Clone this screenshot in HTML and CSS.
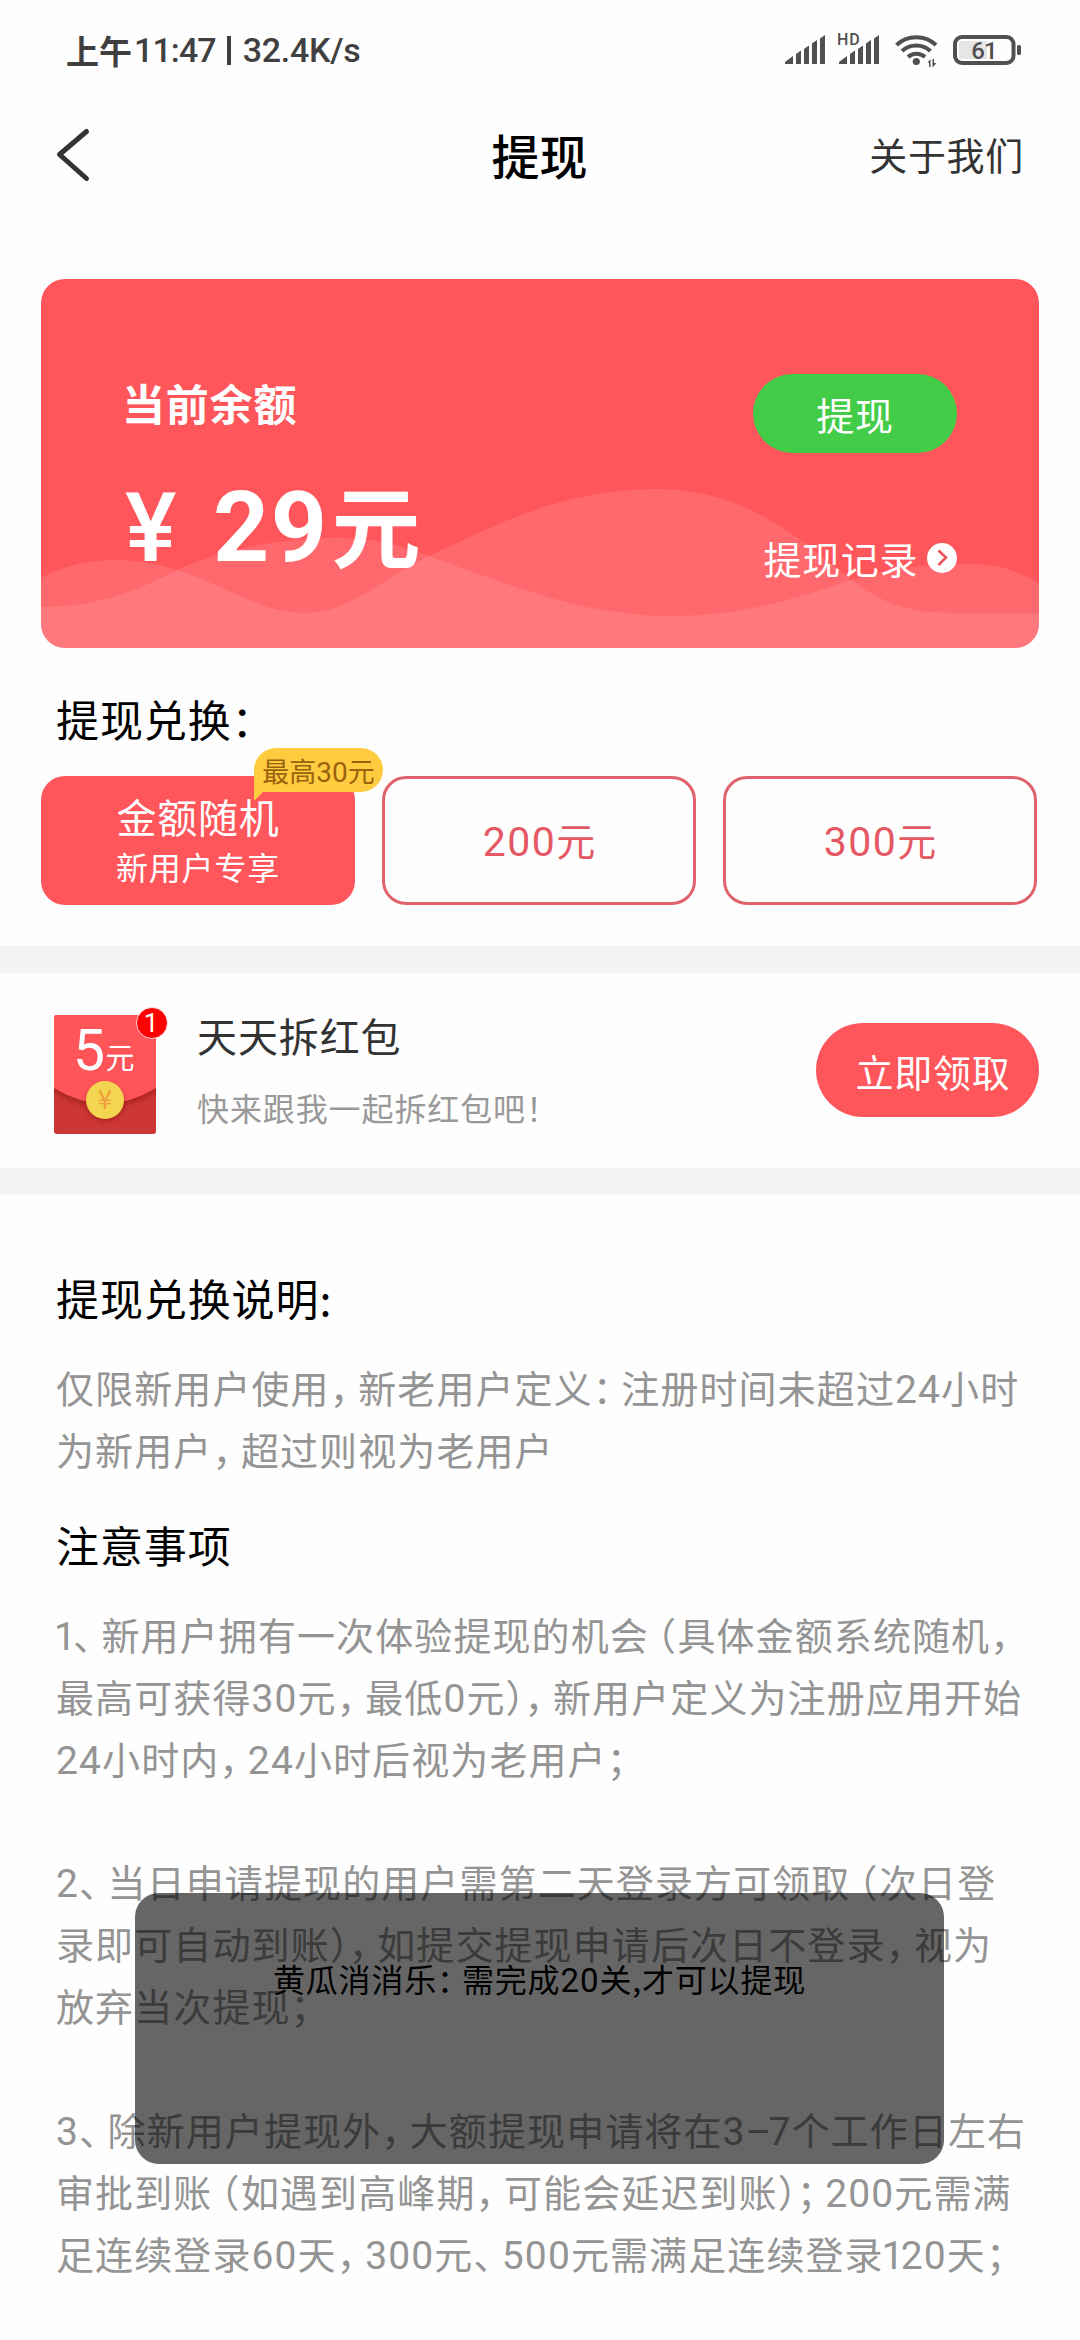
FILE: index.html
```html
<!DOCTYPE html>
<html lang="zh-CN">
<head>
<meta charset="utf-8">
<title>提现</title>
<link rel="stylesheet" href="styles.css">
</head>
<body>
<div class="screen">
  <header class="status">
    <div class="status-text"><span class="status-time">上午</span><span class="clock">11:47</span><i class="status-bar"></i><span class="status-rate">32.4K/s</span></div>
    <svg class="status-icons" width="240" height="40" viewBox="784 30 240 40" fill="#505050">
      <path d="M784 64v-2l8-6v8zM795 64V54l5-3.500v13.500zM803 64V49l5-3.500v18.500zM811 64V43.500l5-3.500v24zM819 64V38.500l5-3.500v29z"/>
      <path d="M838 64v-2l8-6v8zM849 64V54l5-3.500v13.500zM857 64V49l5-3.500v18.500zM865 64V43.500l5-3.500v24zM873 64V38.500l5-3.500v29z"/>
      <text x="836" y="45" class="hd">HD</text>
      <g fill="none" stroke="#505050" stroke-width="4">
        <path d="M895.500 45a29 29 0 0 1 39.500 0"/>
        <path d="M901 51a21 21 0 0 1 28.500 0"/>
        <path d="M907 57a13 13 0 0 1 17 0"/>
      </g>
      <circle cx="915.300" cy="61.500" r="3.600"/>
      <path d="M926.500 62.500l3-3.500v8h-1.500v-4.500zM931.500 59h1.500v4h2.500l-4 4.500z"/>
      <rect x="958" y="41" width="28" height="18" fill="#e6e6e6"/>
      <rect x="954" y="37" width="58.500" height="26" rx="7" fill="none" stroke="#505050" stroke-width="4"/>
      <rect x="1016" y="45" width="4" height="10" rx="1.500"/>
      <text x="983" y="58.500" class="battery">61</text>
    </svg>
  </header>

  <nav class="nav">
    <svg class="back" width="40" height="60" viewBox="52 125 40 60" fill="none" stroke="#333" stroke-width="5" stroke-linecap="round" stroke-linejoin="round"><path d="M86.500 131.500L59.500 154.500L86.500 178.500"/></svg>
    <h1 class="title">提现</h1>
    <a class="about">关于我们</a>
  </nav>

  <section class="card">
    <svg class="waves" width="998" height="369" viewBox="41 279 998 369" fill="#fff">
      <path fill-opacity=".11" d="M41 578C80 556 130 555 177 570C228 586 260 613 305 613C350 613 380 580 427 557C490 528 560 489 655 489C740 489 790 530 852 580C890 610 920 613 960 613H1039V648H41z"/>
      <path fill-opacity=".11" d="M41 607C90 607 130 595 177 570C220 550 280 538 335 538C375 538 400 545 427 555C520 590 590 616 672 616C740 616 790 600 852 580C890 567 930 564 967 564C1000 564 1020 572 1039 583V648H41z"/>
    </svg>
    <div class="balance">
      <div class="balance-label">当前余额</div>
      <div class="amount"><span class="yen">¥</span><span class="figure">29</span>元</div>
    </div>
    <div class="actions">
      <button class="withdraw">提现</button>
      <a class="records">提现记录
        <svg width="30" height="30" viewBox="0 0 30 30"><circle cx="15" cy="15" r="15" fill="#fff"/><path d="M11.500 7.500L19 14.500L11.500 22" fill="none" stroke="#ea555c" stroke-width="2.600"/></svg>
      </a>
    </div>
  </section>

  <section class="exchange">
    <h2 class="heading">提现兑换：</h2>
    <div class="options">
      <div class="option selected">
        <div class="option-title">金额随机</div>
        <div class="option-sub">新用户专享</div>
        <div class="tag">
          <svg class="tag-shape" width="129" height="53" viewBox="0 0 129 53"><path fill="#ffcc40" d="M22 0H107a22 22 0 0 1 0 44H9L0 53V22A22 22 0 0 1 22 0z"/></svg>
          <span class="tag-text">最高<b>30</b>元</span>
        </div>
      </div>
      <div class="option"><b>200</b>元</div>
      <div class="option"><b>300</b>元</div>
    </div>
  </section>

  <section class="packet">
    <svg class="envelope" width="116" height="130" viewBox="54 1005 116 130">
      <defs>
        <clipPath id="env"><rect x="54" y="1015" width="102" height="119" rx="3"/></clipPath>
        <filter id="soft" x="-30%" y="-30%" width="160%" height="160%"><feGaussianBlur stdDeviation="2.200"/></filter>
      </defs>
      <g clip-path="url(#env)">
        <rect x="54" y="1015" width="102" height="119" fill="#cc3735"/>
        <path d="M50 1012H160V1090Q105 1126 50 1090z" fill="#8f1512" opacity=".45" filter="url(#soft)"/>
        <path d="M54 1015H156V1088Q105 1119 54 1088z" fill="#ff5458"/>
      </g>
      <circle cx="105" cy="1102.500" r="19" fill="#8f1512" opacity=".5" filter="url(#soft)"/>
      <circle cx="105" cy="1100" r="19" fill="#f4d550"/>
      <text x="105" y="1109" class="coin">¥</text>
      <text x="73" y="1070" class="five">5</text>
      <text x="105.500" y="1068.500" class="yuan">元</text>
      <circle cx="152" cy="1023" r="15.500" fill="#f00" stroke="#fff" stroke-width=".8"/>
      <text x="151" y="1032" class="count">1</text>
    </svg>
    <div class="packet-text">
      <div class="packet-title">天天拆红包</div>
      <div class="packet-sub">快来跟我一起拆红包吧！</div>
    </div>
    <button class="claim">立即领取</button>
  </section>

  <section class="rules">
    <h2 class="heading">提现兑换说明:</h2>
    <div class="body-text">
      <p>仅限新用户使用<i>，</i>新老用户定义<i>：</i>注册时间未超过<b>24</b>小时</p>
      <p>为新用户<i>，</i>超过则视为老用户</p>
    </div>
    <h2 class="heading second">注意事项</h2>
    <div class="body-text">
      <p><b class="one">1</b><i>、</i>新用户拥有一次体验提现的机会<i class="open">（</i>具体金额系统随机<i>，</i></p>
      <p>最高可获得<b>30</b>元<i>，</i>最低<b>0</b>元<i class="close">）</i><i>，</i>新用户定义为注册应用开始</p>
      <p><b>24</b>小时内<i>，</i><b>24</b>小时后视为老用户<i>；</i></p>
      <p class="gap"><b>2</b><i>、</i>当日申请提现的用户需第二天登录方可领取<i class="open">（</i>次日登</p>
      <p>录即可自动到账<i class="close">）</i><i>，</i>如提交提现申请后次日不登录<i>，</i>视为</p>
      <p>放弃当次提现<i>；</i></p>
      <p class="gap"><b>3</b><i>、</i>除新用户提现外<i>，</i>大额提现申请将在<b>3<span class="dash">–</span>7</b>个工作日左右</p>
      <p>审批到账<i class="open">（</i>如遇到高峰期<i>，</i>可能会延迟到账<i class="close">）</i><i>；</i><b>200</b>元需满</p>
      <p>足连续登录<b>60</b>天<i>，</i><b>300</b>元<i>、</i><b>500</b>元需满足连续登录<b class="one">1</b><b>20</b>天<i>；</i></p>
    </div>
  </section>

  <div class="toast">黄瓜消消乐<i>：</i>需完成<b>20</b>关,才可以提现</div>
</div>
</body>
</html>
```
FILE: styles.css
```css
* { box-sizing: border-box; margin: 0; padding: 0; }

body {
  width: 1080px;
  height: 2340px;
  overflow: hidden;
  background: #fefefe;
  font-family: "Noto Sans CJK SC", sans-serif;
  color: #000;
  white-space: nowrap;
}

i, b { font-style: normal; font-weight: inherit; }
b { font-family: Roboto, sans-serif; }
button { border: 0; font: inherit; color: #fff; }
svg { overflow: visible; }

.screen {
  position: relative;
  display: flex;
  flex-direction: column;
  width: 1080px;
  height: 2340px;
  overflow: hidden;
}

/* status bar */
.status {
  display: flex;
  justify-content: space-between;
  height: 100px;
  padding: 0 55px 0 66px;
}
.status-text {
  display: flex;
  align-items: center;
  height: 100px;
  color: #404040;
  font: 500 34px/48px Roboto, sans-serif;
}
.status-time { font-family: "Noto Sans CJK SC", sans-serif; font-size: 33px; font-weight: 700; }
.clock { margin-left: 2px; letter-spacing: -.9px; }
.status-bar { width: 4px; height: 29px; margin: 0 12px 0 11px; background: #404040; }
.status-rate { letter-spacing: -.3px; }
.status-icons { margin-top: 30px; }
.hd { font: 500 16px Roboto, sans-serif; letter-spacing: 1px; }
.battery { font: 500 24px Roboto, sans-serif; text-anchor: middle; letter-spacing: -.8px; }

/* title bar */
.nav {
  display: grid;
  grid-template-columns: 1fr auto 1fr;
  align-items: center;
  height: 114px;
  padding: 0 56px 0 52px;
}
.back { margin-top: -5px; }
.title { margin-top: -7px; padding-left: 3px; font-size: 48px; font-weight: 500; line-height: 60px; }
.about { justify-self: end; margin-top: -7px; color: #333; font-size: 38px; letter-spacing: .7px; }

/* balance card */
.card {
  position: relative;
  display: flex;
  justify-content: space-between;
  height: 369px;
  margin: 65px 41px 0;
  padding: 95px 82px 0 81px;
  border-radius: 24px;
  background: #ff565b;
  color: #fff;
  overflow: hidden;
}
.waves { position: absolute; left: 0; top: 0; }
.balance, .actions { position: relative; }
.balance-label { margin-top: -2px; font-size: 43px; font-weight: 700; line-height: 60px; letter-spacing: .8px; }
.amount { display: flex; align-items: baseline; margin-top: 36px; font-size: 89px; font-weight: 700; line-height: 110px; }
.yen { width: 91px; padding-left: 3px; font: 500 97px/110px Roboto, sans-serif; }
.figure { margin-right: 3px; font: 700 98px/110px Roboto, sans-serif; letter-spacing: 1.5px; }
.actions { display: flex; flex-direction: column; align-items: flex-end; }
.withdraw {
  width: 204px;
  height: 79px;
  border-radius: 40px;
  background: #43cc47;
  font-size: 38px;
  letter-spacing: .7px;
}
.records {
  display: flex;
  align-items: center;
  gap: 9px;
  margin-top: 75px;
  font-size: 38px;
  line-height: 60px;
  letter-spacing: .6px;
}

/* exchange options */
.heading { font-size: 43px; font-weight: 400; line-height: 60px; letter-spacing: .9px; }
.exchange { height: 298px; padding: 40px 43px 0 41px; }
.exchange .heading { padding-left: 15px; }
.options {
  display: grid;
  grid-template-columns: repeat(3, 314px);
  justify-content: space-between;
  margin-top: 28px;
}
.option {
  position: relative;
  display: flex;
  align-items: baseline;
  justify-content: center;
  height: 129px;
  border: 3px solid #e0636c;
  border-radius: 24px;
  color: #e45864;
  font-size: 39px;
  line-height: 120px;
}
.option > b { font-size: 41px; letter-spacing: 1.5px; }
.option.selected {
  flex-direction: column;
  align-items: center;
  border: 0;
  background: #ff565b;
  color: #fff;
}
.option-title { font-size: 40px; line-height: 50px; letter-spacing: .8px; }
.option-sub { font-size: 32px; line-height: 50px; letter-spacing: .8px; }
.tag { position: absolute; left: 213px; top: -28px; width: 129px; height: 44px; }
.tag-shape { position: absolute; left: 0; top: 0; }
.tag-text {
  position: relative;
  display: block;
  text-align: center;
  color: #99620c;
  font-size: 27px;
  line-height: 45px;
}
.tag b { font-size: 28px; }

/* red packet row */
.packet {
  display: flex;
  height: 249px;
  padding: 32px 41px 0 54px;
  border-top: 27px solid #f5f3f4;
  border-bottom: 27px solid #f5f3f4;
}
.packet-text { flex: 1; padding-left: 27px; }
.packet-title { color: #333; font-size: 40px; line-height: 60px; letter-spacing: .9px; }
.packet-sub { margin-top: 12px; color: #999; font-size: 32px; line-height: 60px; letter-spacing: .9px; }
.claim {
  width: 223px;
  height: 94px;
  margin-top: 18px;
  padding-left: 11px;
  border-radius: 47px;
  background: #ff565b;
  font-size: 38px;
  letter-spacing: .7px;
}
.five { font: 400 57px Roboto, sans-serif; fill: #fff; }
.yuan { font: 400 29px "Noto Sans CJK SC", sans-serif; fill: #fff; }
.coin { font: 400 26px "Noto Sans CJK SC", sans-serif; fill: #ee9c3c; text-anchor: middle; }
.count { font: 400 26px Roboto, sans-serif; fill: #fff; text-anchor: middle; }

/* rules */
.rules { padding: 72px 0 0 56px; }
.body-text {
  margin-top: 29px;
  color: #949494;
  font-size: 38px;
  line-height: 61.9px;
  letter-spacing: 1.1px;
}
.body-text p { height: 61.9px; }
.body-text i {
  display: inline-block;
  width: 28.500px;
  letter-spacing: 0;
  font-feature-settings: "halt";
}
.body-text .open { padding-left: 8px; }
.body-text .close { width: 19px; }
.body-text b { font-size: 39px; letter-spacing: 1.100px; }
.body-text .one { display: inline-block; width: 17px; text-indent: -2px; letter-spacing: 0; }
.body-text .dash { display: inline-block; width: 23px; text-align: center; }
.body-text .gap { margin-top: 61.9px; }
.second { margin-top: 34px; }

/* toast */
.toast {
  position: absolute;
  left: 135px;
  top: 1893px;
  width: 809px;
  height: 271px;
  padding-top: 55px;
  border-radius: 24px;
  background: rgba(0, 0, 0, .6);
  text-align: center;
  font-size: 32px;
  line-height: 60px;
  letter-spacing: .8px;
}
.toast i {
  display: inline-block;
  width: 25px;
  text-align: left;
  font-feature-settings: "halt";
}
.toast b { font-size: 33px; letter-spacing: 1px; }
```
